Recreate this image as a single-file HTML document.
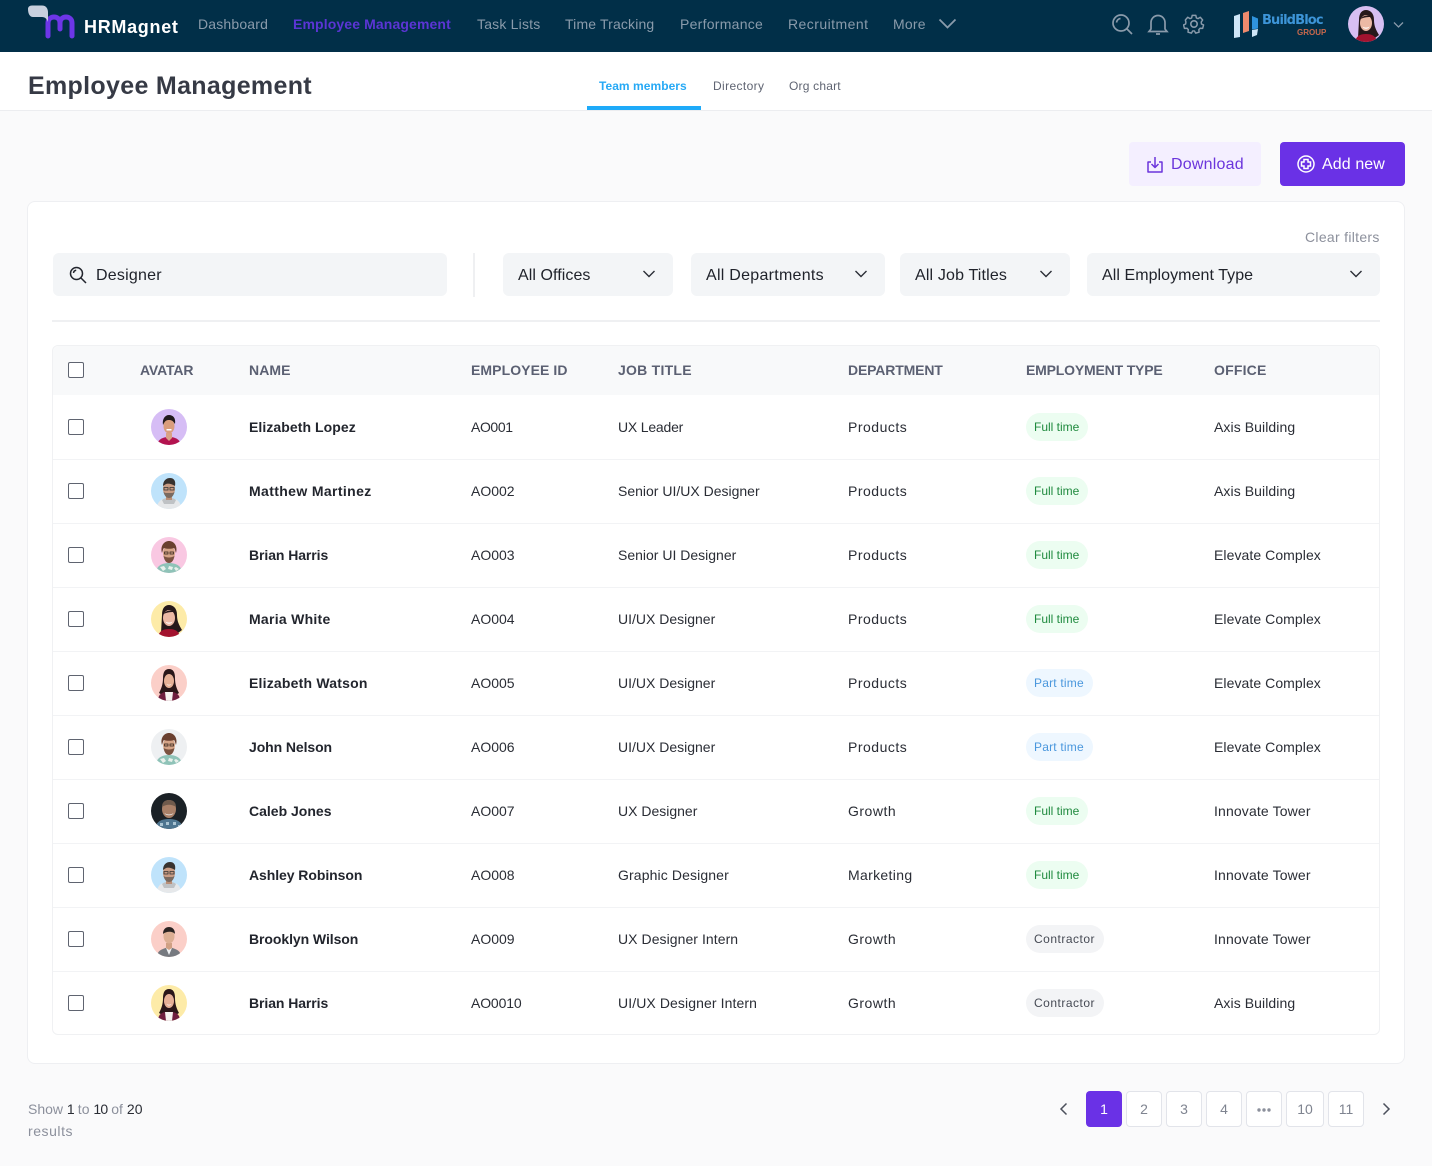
<!DOCTYPE html>
<html lang="en"><head><meta charset="utf-8"><title>Employee Management</title>
<style>
html,body{margin:0;padding:0}
body{width:1432px;height:1166px;position:relative;overflow:hidden;background:#fafafb;font-family:"Liberation Sans",sans-serif;color:#1b1f29}
.a{position:absolute;white-space:nowrap}
.nav{top:15px;font-size:14px;line-height:18px;color:#8a9bab}
.sel{position:absolute;top:253px;height:43px;background:#f3f5f7;border-radius:6px;font-size:16px;line-height:45px;color:#20232b}
.sel span{position:absolute;left:15px}
.sel svg{position:absolute;top:16px}
.th{top:362px;font-size:14px;line-height:16px;font-weight:bold;color:#5b6072}
.row{position:absolute;left:53px;width:1326px;height:63px;background:#fff;border-bottom:1px solid #f2f3f5}
.cb{position:absolute;left:15px;top:23px;width:14px;height:14px;border:1px solid #5f6470;border-radius:2px;background:#fff}
.c{position:absolute;top:23px;font-size:14px;line-height:17px;color:#2a2d35;white-space:nowrap}
.n{left:196px;font-weight:bold;color:#22252d}
.e{left:418px}.j{left:565px}
.d{left:795px;letter-spacing:.5px}.dg{letter-spacing:.5px}.dm{letter-spacing:.33px}
.o{left:1161px}.oa{letter-spacing:.08px}.oe{letter-spacing:.07px}.oi{letter-spacing:.14px}
.b{position:absolute;left:973px;top:17px;height:28px;line-height:28px;padding:0 8px;border-radius:14px;font-size:12px;white-space:nowrap}
.ft{background:#ecfdf1;color:#1f8a3e;width:46px}
.pt{background:#eef7ff;color:#4a97dd;width:51px;letter-spacing:.2px}
.ct{background:#f3f4f6;color:#464a54;width:62px;letter-spacing:.5px}
.av{position:absolute;left:98px;top:13px;width:36px;height:36px;border-radius:50%;display:block;filter:blur(.35px)}
.p{position:absolute;top:1091px;height:34px;border:1px solid #e2e4ea;border-radius:4px;background:#fff;text-align:center;line-height:34px;font-size:14px;color:#7f8490}
.dk{color:#2a2d35;letter-spacing:-.8px}
</style></head><body>
<svg width="0" height="0" style="position:absolute"><defs>
<symbol id="wA" viewBox="0 0 36 36"><path d="M6 36c1-6 6-8 12-8s11 2 12 8z" fill="#b3134f"/><path d="M15 24h6v5l-3 3-3-3z" fill="#d9a285"/><ellipse cx="18" cy="17" rx="5.500" ry="7.500" fill="#d99d7c"/><path d="M12 16c-1-6 2-10 6-10s7 3 6 9c-2-3-3-4-6-4s-4 1-6 5z" fill="#211a1c"/><path d="M15.500 20h5v1.500h-5z" fill="#fff"/></symbol>
<symbol id="mB" viewBox="0 0 36 36"><path d="M6 36c0-8 5-11 12-11s12 3 12 11z" fill="#e6e8ea"/><path d="M11 27c3-3 11-3 14 0l-2 4H13z" fill="#bfc2c5"/><path d="M15 22h6v5h-6z" fill="#b98f78"/><ellipse cx="18" cy="16" rx="6" ry="8" fill="#c89c84"/><path d="M12.500 19c1 4 3 6 5.500 6s4.500-2 5.500-6l-2 1h-7z" fill="#7a6a60"/><path d="M12 13c0-5 3-8 7-8s6 3 5 8c-3-2-7-3-9-2z" fill="#37322f"/><path d="M13 14.500h4v2.500h-4zM19 14.500h4v2.500h-4z" fill="none" stroke="#333" stroke-width=".8"/></symbol>
<symbol id="mC" viewBox="0 0 36 36"><path d="M5 36c0-7 6-10 13-10s13 3 13 10z" fill="#8fc3b8"/><path d="M9 30l4-1 2 3-3 2zM18 29l4 1-1 3-4-1zM25 30l3 2-3 2-2-3z" fill="#e9f1ec"/><ellipse cx="18" cy="16" rx="6" ry="7.500" fill="#d5a487"/><path d="M11 16c-2-7 2-12 7-12s9 5 7 12c-1-3-1-4-2-5-3 1-7 1-10 0-1 1-1 2-2 5z" fill="#6a4030"/><path d="M12.500 19c1 5 3 7 5.500 7s4.500-2 5.500-7c-2 1-3.500 1.500-5.500 1.500s-3.500-.5-5.500-1.500z" fill="#7b5340"/><path d="M13.500 15h3.500v2h-3.500zM19 15h3.500v2H19z" fill="none" stroke="#2a1c15" stroke-width=".7"/></symbol>
<symbol id="wD" viewBox="0 0 36 36"><path d="M11 14c0-7 3-10 7-10s8 3 8 10c0 6 2 10 5 15l-4 3H10z" fill="#26181a"/><path d="M7 36c1-6 5-8 11-8s10 2 11 8z" fill="#a3132f"/><ellipse cx="18" cy="17" rx="6" ry="8" fill="#ecb9a5"/><path d="M14.500 20.500c2 1.500 5 1.500 7 0-1 3-6 3-7 0z" fill="#fff"/><path d="M12.500 13c2-3 7-5 11-2-3 0-7 0-11 2z" fill="#26181a"/></symbol>
<symbol id="wE" viewBox="0 0 36 36"><path d="M12 13c0-6 2-9 6-9s6 3 6 9c0 7 2 11 4 15l-5 3H13l-5-3c2-4 4-8 4-15z" fill="#2b1719"/><path d="M7 36c0-6 3-8 7-9h8c4 1 7 3 7 9z" fill="#6f1f3f"/><path d="M14 27h8l-1 9h-6z" fill="#f6f2f0"/><ellipse cx="18" cy="16" rx="5" ry="7" fill="#e6b096"/><path d="M15.500 19c2 1 3 1 5 0-1 2-4 2-5 0z" fill="#fff"/></symbol>
<symbol id="mG" viewBox="0 0 36 36"><path d="M4 36c1-8 7-10 14-10s13 2 14 10z" fill="#4e7590"/><path d="M9 30h3v3H9zM15 29h3v3h-3zM22 29h3v3h-3zM27 32h2v2h-2z" fill="#a9c3d2"/><ellipse cx="18" cy="16" rx="7" ry="9" fill="#a98068"/><path d="M11 14c0-5 3-7 7-7s7 2 7 7c-4-3-10-3-14 0z" fill="#6f5a4c"/><path d="M13.500 20c2 2 7 2 9 0-1 3-8 3-9 0z" fill="#eee"/></symbol>
<symbol id="mI" viewBox="0 0 36 36"><path d="M6 36c0-6 4-8 12-10 8 2 12 4 12 10z" fill="#767a80"/><path d="M15 27l3-2 3 2-3 7z" fill="#eff1f3"/><path d="M15 22h6v5l-3 2-3-2z" fill="#d0a084"/><ellipse cx="18" cy="15" rx="5.500" ry="7.500" fill="#dcaf94"/><path d="M12 13c0-5 3-7 6-7s6 2 6 7c-2-3-9-3-12 0z" fill="#2a2322"/></symbol>
</defs></svg>

<!-- top bar -->
<div class="a" style="left:0;top:0;width:1432px;height:52px;background:#012f48"></div>
<svg class="a" style="left:26px;top:3px" width="54" height="38" viewBox="0 0 54 38" fill="none"><path d="M22 33V20c0-4 3-6 6-6s6 2 6 6v6M34 20c0-4 3-6 6-6s6 2 6 6v13" stroke="#6d36e8" stroke-width="5" stroke-linecap="round"/><path d="M2 6c0-2 1.500-3.500 4-3.500h10c4 0 6 3 6 7V19c-1-3-3-5-6-5H7c-3 0-5-3-5-8z" fill="#c8d0de"/></svg>
<div class="a" style="left:84px;top:16px;font-size:18px;line-height:22px;font-weight:bold;color:#fff;letter-spacing:.7px">HRMagnet</div>
<div class="a nav" style="left:198px;letter-spacing:.17px">Dashboard</div>
<div class="a nav" style="left:293px;font-weight:bold;color:#5b35d5;letter-spacing:.12px">Employee Management</div>
<div class="a nav" style="left:477px;letter-spacing:.2px">Task Lists</div>
<div class="a nav" style="left:565px;letter-spacing:.15px">Time Tracking</div>
<div class="a nav" style="left:680px;letter-spacing:.27px">Performance</div>
<div class="a nav" style="left:788px;letter-spacing:.45px">Recruitment</div>
<div class="a nav" style="left:893px;letter-spacing:.2px">More</div>
<svg class="a" style="left:938px;top:17px" width="19" height="14" fill="none" stroke="#8a9bab" stroke-width="1.800"><path d="M1.500 2.500l8 8 8-8"/></svg>
<svg class="a" style="left:1110px;top:12px" width="24" height="24" fill="none" stroke="#8a9bab" stroke-width="1.700"><circle cx="11" cy="11" r="8"/><path d="M6.500 10.500c.3-2.200 2-3.800 4-4M17 17l5 5"/></svg>
<svg class="a" style="left:1147px;top:13px" width="22" height="23" fill="none" stroke="#8a9bab" stroke-width="1.700"><path d="M4 16V9.500a7 7 0 0114 0V16l2 2.500H2zM9 21h4"/></svg>
<svg class="a" style="left:1183px;top:13px" width="22" height="22" viewBox="0 0 22 22" fill="none" stroke="#8a9bab" stroke-width="1.600" stroke-linejoin="round"><circle cx="11" cy="11" r="3.200"/><path d="M9 1.500h4l.6 2.800 1.800.8 2.500-1.500 2.600 3-1.600 2.300.3 2.100 2.300 1-1 3.800-2.800-.1-1.400 1.500.3 2.800-3.800 1-1.300-2.400h-2l-1.300 2.400-3.800-1 .3-2.800-1.400-1.500-2.800.1-1-3.800 2.300-1 .3-2.100L1.500 6.600l2.600-3 2.500 1.500 1.800-.8z" transform="translate(1 1) scale(.91)"/></svg>
<svg class="a" style="left:1234px;top:10px" width="26" height="28"><path d="M0 6l6-2v23l-6 1z" fill="#cfe6f7"/><path d="M9 3l6-2v20l-6 2z" fill="#ee8a6d"/><path d="M18 6l6 2.500v10l-6 1z" fill="#2f93dc"/><path d="M18 20l6-1-1 6-5 2z" fill="#cfe6f7"/></svg>
<div class="a" style="left:1262px;top:12px;font-size:13px;line-height:17px;font-weight:bold;color:#3d95d8;font-family:'DejaVu Sans',sans-serif;letter-spacing:-.85px">BuildBloc</div>
<div class="a" style="left:1297px;top:28px;font-size:8px;line-height:10px;font-weight:bold;color:#c7684c">GROUP</div>
<svg class="a" style="left:1348px;top:6px;border-radius:50%;filter:blur(.35px)" width="36" height="36"><rect width="36" height="36" fill="#d7bff2"/><use href="#wD" width="36" height="36"/></svg>
<svg class="a" style="left:1393px;top:21px" width="11" height="8" fill="none" stroke="#8a9bab" stroke-width="1.300"><path d="M1 1.500l4.500 4.500L10 1.500"/></svg>

<!-- sub header -->
<div class="a" style="left:0;top:52px;width:1432px;height:58px;background:#fff;border-bottom:1px solid #ecedf0"></div>
<div class="a" style="left:28px;top:71px;font-size:25px;line-height:31px;font-weight:bold;color:#363a45;letter-spacing:.32px">Employee Management</div>
<div class="a" style="left:599px;top:79px;font-size:12px;line-height:15px;font-weight:bold;color:#26a9f5;letter-spacing:.05px">Team members</div>
<div class="a" style="left:713px;top:79px;font-size:12px;line-height:15px;color:#5f6472;letter-spacing:.38px">Directory</div>
<div class="a" style="left:789px;top:79px;font-size:12px;line-height:15px;color:#5f6472;letter-spacing:.2px">Org chart</div>
<div class="a" style="left:587px;top:106px;width:114px;height:4px;background:#1eaaf9"></div>

<!-- actions -->
<div class="a" style="left:1129px;top:142px;width:132px;height:44px;background:#f4efff;border-radius:4px"></div>
<svg class="a" style="left:1146px;top:155px" width="18" height="19" fill="none" stroke="#6b35dc" stroke-width="1.500"><path d="M5 7H2v10h14V7h-3M9 2v10M5.500 9L9 12.500 12.500 9" stroke-linejoin="round"/></svg>
<div class="a" style="left:1171px;top:154px;font-size:16px;line-height:21px;color:#6b35dc;letter-spacing:.22px">Download</div>
<div class="a" style="left:1280px;top:142px;width:125px;height:44px;background:#6a31e6;border-radius:4px"></div>
<svg class="a" style="left:1297px;top:155px" width="18" height="18" fill="none" stroke="#fff" stroke-width="1.500"><circle cx="9" cy="9" r="8"/><path d="M7 4.500h4V7h2.500v4H11v2.500H7V11H4.500V7H7z"/></svg>
<div class="a" style="left:1322px;top:154px;font-size:16px;line-height:21px;color:#fff;letter-spacing:.1px">Add new</div>

<!-- main card -->
<div class="a" style="left:27px;top:201px;width:1376px;height:861px;background:#fff;border:1px solid #eeeff2;border-radius:8px"></div>
<div class="a" style="left:1305px;top:229px;font-size:14px;line-height:17px;color:#8c909c;letter-spacing:.3px">Clear filters</div>
<div class="a" style="left:53px;top:253px;width:394px;height:43px;background:#f3f5f7;border-radius:6px"></div>
<svg class="a" style="left:69px;top:266px" width="18" height="18" fill="none" stroke="#22252d" stroke-width="1.500"><circle cx="7.500" cy="7.500" r="6"/><path d="M4.500 7c.2-1.500 1.200-2.500 2.700-2.700M12 12l5 5"/></svg>
<div class="a" style="left:96px;top:265px;font-size:16px;line-height:21px;color:#20232b;letter-spacing:.22px">Designer</div>
<div class="a" style="left:473px;top:253px;width:2px;height:44px;background:#eff0f2"></div>

<div class="sel" style="left:503px;width:170px"><span style="letter-spacing:.07px">All Offices</span><svg style="left:139px" width="14" height="10" fill="none" stroke="#2a2d35" stroke-width="1.400"><path d="M1.500 2l5.500 5.500L12.500 2"/></svg></div>
<div class="sel" style="left:691px;width:194px"><span style="letter-spacing:.27px">All Departments</span><svg style="left:163px" width="14" height="10" fill="none" stroke="#2a2d35" stroke-width="1.400"><path d="M1.500 2l5.500 5.500L12.500 2"/></svg></div>
<div class="sel" style="left:900px;width:170px"><span style="letter-spacing:.16px">All Job Titles</span><svg style="left:139px" width="14" height="10" fill="none" stroke="#2a2d35" stroke-width="1.400"><path d="M1.500 2l5.500 5.500L12.500 2"/></svg></div>
<div class="sel" style="left:1087px;width:293px"><span style="letter-spacing:.06px">All Employment Type</span><svg style="left:262px" width="14" height="10" fill="none" stroke="#2a2d35" stroke-width="1.400"><path d="M1.500 2l5.500 5.500L12.500 2"/></svg></div>
<div class="a" style="left:52px;top:320px;width:1328px;height:2px;background:#eff0f2"></div>

<!-- table -->
<div class="a" style="left:52px;top:345px;width:1326px;height:688px;border:1px solid #f0f1f3;border-radius:6px;background:#fff"></div>
<div class="a" style="left:53px;top:346px;width:1326px;height:49px;background:#f8f9fa;border-radius:6px 6px 0 0"></div>
<div class="a" style="left:68px;top:362px;width:14px;height:14px;border:1px solid #5f6470;border-radius:2px;background:#fff"></div>
<div class="a th" style="left:140px;letter-spacing:-.15px">AVATAR</div>
<div class="a th" style="left:249px;letter-spacing:.1px">NAME</div>
<div class="a th" style="left:471px;letter-spacing:.08px">EMPLOYEE ID</div>
<div class="a th" style="left:618px;letter-spacing:.25px">JOB TITLE</div>
<div class="a th" style="left:848px;letter-spacing:-.15px">DEPARTMENT</div>
<div class="a th" style="left:1026px;letter-spacing:-.18px">EMPLOYMENT TYPE</div>
<div class="a th" style="left:1214px;letter-spacing:.2px">OFFICE</div>

<div class="row" style="top:396px"><div class="cb"></div><svg class="av" width="36" height="36"><rect width="36" height="36" fill="#d6bdf5"/><use href="#wA" width="36" height="36"/></svg><div class="c n" style="letter-spacing:.07px">Elizabeth Lopez</div><div class="c e" style="letter-spacing:-.4px">AO001</div><div class="c j" style="letter-spacing:-.2px">UX Leader</div><div class="c d">Products</div><div class="b ft">Full time</div><div class="c o oa">Axis Building</div></div>
<div class="row" style="top:460px"><div class="cb"></div><svg class="av" width="36" height="36"><rect width="36" height="36" fill="#bfe3fb"/><use href="#mB" width="36" height="36"/></svg><div class="c n" style="letter-spacing:.37px">Matthew Martinez</div><div class="c e">AO002</div><div class="c j">Senior UI/UX Designer</div><div class="c d">Products</div><div class="b ft">Full time</div><div class="c o oa">Axis Building</div></div>
<div class="row" style="top:524px"><div class="cb"></div><svg class="av" width="36" height="36"><rect width="36" height="36" fill="#f9c8e2"/><use href="#mC" width="36" height="36"/></svg><div class="c n" style="letter-spacing:-.08px">Brian Harris</div><div class="c e">AO003</div><div class="c j">Senior UI Designer</div><div class="c d">Products</div><div class="b ft">Full time</div><div class="c o oe">Elevate Complex</div></div>
<div class="row" style="top:588px"><div class="cb"></div><svg class="av" width="36" height="36"><rect width="36" height="36" fill="#fdeba8"/><use href="#wD" width="36" height="36"/></svg><div class="c n" style="letter-spacing:.27px">Maria White</div><div class="c e">AO004</div><div class="c j">UI/UX Designer</div><div class="c d">Products</div><div class="b ft">Full time</div><div class="c o oe">Elevate Complex</div></div>
<div class="row" style="top:652px"><div class="cb"></div><svg class="av" width="36" height="36"><rect width="36" height="36" fill="#fbcfc8"/><use href="#wE" width="36" height="36"/></svg><div class="c n" style="letter-spacing:.2px">Elizabeth Watson</div><div class="c e">AO005</div><div class="c j">UI/UX Designer</div><div class="c d">Products</div><div class="b pt">Part time</div><div class="c o oe">Elevate Complex</div></div>
<div class="row" style="top:716px"><div class="cb"></div><svg class="av" width="36" height="36"><rect width="36" height="36" fill="#eef0f2"/><use href="#mC" width="36" height="36"/></svg><div class="c n" style="letter-spacing:-.09px">John Nelson</div><div class="c e">AO006</div><div class="c j">UI/UX Designer</div><div class="c d">Products</div><div class="b pt">Part time</div><div class="c o oe">Elevate Complex</div></div>
<div class="row" style="top:780px"><div class="cb"></div><svg class="av" width="36" height="36"><rect width="36" height="36" fill="#1b2126"/><use href="#mG" width="36" height="36"/></svg><div class="c n">Caleb Jones</div><div class="c e">AO007</div><div class="c j">UX Designer</div><div class="c d dg">Growth</div><div class="b ft">Full time</div><div class="c o oi">Innovate Tower</div></div>
<div class="row" style="top:844px"><div class="cb"></div><svg class="av" width="36" height="36"><rect width="36" height="36" fill="#bfe3fb"/><use href="#mB" width="36" height="36"/></svg><div class="c n" style="letter-spacing:-.07px">Ashley Robinson</div><div class="c e">AO008</div><div class="c j" style="letter-spacing:.12px">Graphic Designer</div><div class="c d dm">Marketing</div><div class="b ft">Full time</div><div class="c o oi">Innovate Tower</div></div>
<div class="row" style="top:908px"><div class="cb"></div><svg class="av" width="36" height="36"><rect width="36" height="36" fill="#fbcfc8"/><use href="#mI" width="36" height="36"/></svg><div class="c n" style="letter-spacing:-.07px">Brooklyn Wilson</div><div class="c e">AO009</div><div class="c j" style="letter-spacing:.06px">UX Designer Intern</div><div class="c d dg">Growth</div><div class="b ct">Contractor</div><div class="c o oi">Innovate Tower</div></div>
<div class="row" style="top:972px;height:62px;border-bottom:0;border-radius:0 0 6px 6px"><div class="cb"></div><svg class="av" width="36" height="36"><rect width="36" height="36" fill="#fdeba8"/><use href="#wE" width="36" height="36"/></svg><div class="c n" style="letter-spacing:-.08px">Brian Harris</div><div class="c e" style="letter-spacing:-.15px">AO0010</div><div class="c j" style="letter-spacing:.1px">UI/UX Designer Intern</div><div class="c d dg">Growth</div><div class="b ct">Contractor</div><div class="c o oa">Axis Building</div></div>

<!-- footer -->
<div class="a" style="left:28px;top:1098px;font-size:14px;line-height:22px;color:#8c909c">Show <span class="dk">1</span> to <span class="dk">10</span> of <span class="dk" style="letter-spacing:.1px">20</span><br><span style="letter-spacing:.55px">results</span></div>
<svg class="a" style="left:1058px;top:1102px" width="11" height="14" fill="none" stroke="#4c505c" stroke-width="1.500"><path d="M8.500 1.500L3 7l5.500 5.500"/></svg>
<div class="a p" style="left:1086px;width:36px;height:36px;line-height:36px;border:0;background:#6a31e6;color:#fff">1</div>
<div class="a p" style="left:1126px;width:34px">2</div>
<div class="a p" style="left:1166px;width:34px">3</div>
<div class="a p" style="left:1206px;width:34px">4</div>
<div class="a p" style="left:1246px;width:34px"><svg width="16" height="6" style="display:inline-block;vertical-align:middle" fill="#8c909c"><circle cx="3" cy="3" r="1.700"/><circle cx="8" cy="3" r="1.700"/><circle cx="13" cy="3" r="1.700"/></svg></div>
<div class="a p" style="left:1286px;width:36px">10</div>
<div class="a p" style="left:1328px;width:34px">11</div>
<svg class="a" style="left:1381px;top:1102px" width="11" height="14" fill="none" stroke="#4c505c" stroke-width="1.500"><path d="M2.500 1.500L8 7l-5.500 5.500"/></svg>
</body></html>
